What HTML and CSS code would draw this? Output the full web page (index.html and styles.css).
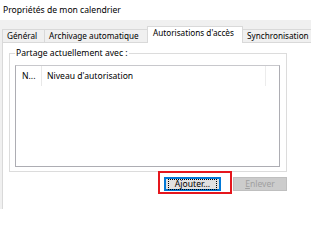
FILE: index.html
```html
<!DOCTYPE html>
<html lang="fr">
<head>
<meta charset="utf-8">
<title>Propriétés de mon calendrier</title>
<link rel="stylesheet" href="styles.css">
</head>
<body>
<div class="title">Propriétés de mon calendrier</div>
<div class="dialog">
  <div class="tabs">
    <div class="tab tab-general">Général</div>
    <div class="tab tab-archive">Archivage automatique</div>
    <div class="tab tab-perm active">Autorisations d'accès</div>
    <div class="tab tab-sync">Synchronisation</div>
  </div>
  <div class="panel">
    <fieldset class="group">
      <legend class="legend">Partage actuellement avec :</legend>
      <div class="list">
        <div class="list-head">
          <div class="col col-name">N...</div>
          <div class="col col-level">Niveau d'autorisation</div>
          <div class="col col-rest"></div>
        </div>
      </div>
    </fieldset>
    <div class="buttons">
      <div class="highlight">
        <button class="btn btn-default"><span class="focus">A<u>j</u>outer...</span></button>
      </div>
      <button class="btn btn-disabled" disabled><u>E</u>nlever</button>
    </div>
  </div>
</div>
</body>
</html>
```
FILE: styles.css
```css
html, body {
  margin: 0;
  padding: 0;
  background: #ffffff;
}
body {
  font-family: "Noto Sans", "Open Sans", sans-serif;
  font-size: 8.6px;
  color: #000000;
  width: 311px;
  height: 209px;
  overflow: hidden;
}
.title {
  height: 20px;
  line-height: 20px;
  padding-left: 3px;
  background: #ffffff;
}
.dialog {
  background: #f0f0f0;
  padding-top: 6px;
  height: 183px;
  overflow: hidden;
}
.tabs {
  display: flex;
  align-items: flex-end;
  margin-left: 2px;
  height: 16px;
}
.tab {
  box-sizing: border-box;
  height: 13px;
  line-height: 12px;
  border: 1px solid #d9d9d9;
  border-bottom: 0;
  background: #f0f0f0;
  padding-left: 4px;
  white-space: nowrap;
  overflow: hidden;
  flex: none;
  margin-left: -1px;
  font-size: 8.2px;
}
.tab-general { width: 43px; margin-left: 0; }
.tab-archive { width: 104px; }
.tab-perm { width: 96px; }
.tab-sync { width: 80px; }
.tab.active {
  height: 17px;
  background: #ffffff;
  padding-left: 5px;
  margin-bottom: -1px;
  position: relative;
  z-index: 1;
}
.panel {
  margin-left: 2px;
  border-top: 1px solid #d9d9d9;
  border-left: 1px solid #d9d9d9;
  background: #ffffff;
  padding: 4px 0 0 6px;
  height: 200px;
}
.group {
  box-sizing: border-box;
  width: 278px;
  margin: 0;
  border: 1px solid #dcdcdc;
  padding: 6px 6px 4px 5px;
}
.legend {
  padding: 0 1px;
  line-height: 12px;
}
.list {
  box-sizing: border-box;
  width: 265px;
  height: 102px;
  border: 1px solid #adadb3;
  border-top-color: #c8c8cc;
}
.list-head {
  display: flex;
  height: 20px;
  line-height: 20px;
}
.col {
  box-sizing: border-box;
  white-space: nowrap;
}
.col-name {
  width: 26px;
  padding-left: 6px;
  border-right: 1px solid #e8e8e8;
}
.col-level {
  width: 224px;
  padding-left: 5px;
  border-right: 1px solid #ececec;
}
.buttons {
  display: flex;
  align-items: flex-start;
  width: 278px;
  justify-content: flex-end;
  margin-top: -1px;
}
.highlight {
  border: 2px solid #e5161d;
  padding: 4px 9px 1px 4px;
}
.btn {
  box-sizing: border-box;
  height: 14px;
  margin: 0;
  font-family: inherit;
  font-size: 8.6px;
  line-height: 10px;
  padding: 0;
  color: #000000;
}
.btn-default {
  width: 57px;
  background: #e1e1e1;
  border: 1px solid #0078d7;
  box-shadow: inset 0 0 0 1px #0078d7;
  display: flex;
  align-items: center;
  justify-content: center;
}
.focus {
  display: block;
  width: 47px;
  height: 9px;
  line-height: 9px;
  outline: 1px dotted #000000;
}
.btn-disabled {
  width: 54px;
  margin-top: 6px;
  margin-left: 1px;
  background: #cccccc;
  border: 1px solid #bfbfbf;
  color: #a0a0a0;
}
```
